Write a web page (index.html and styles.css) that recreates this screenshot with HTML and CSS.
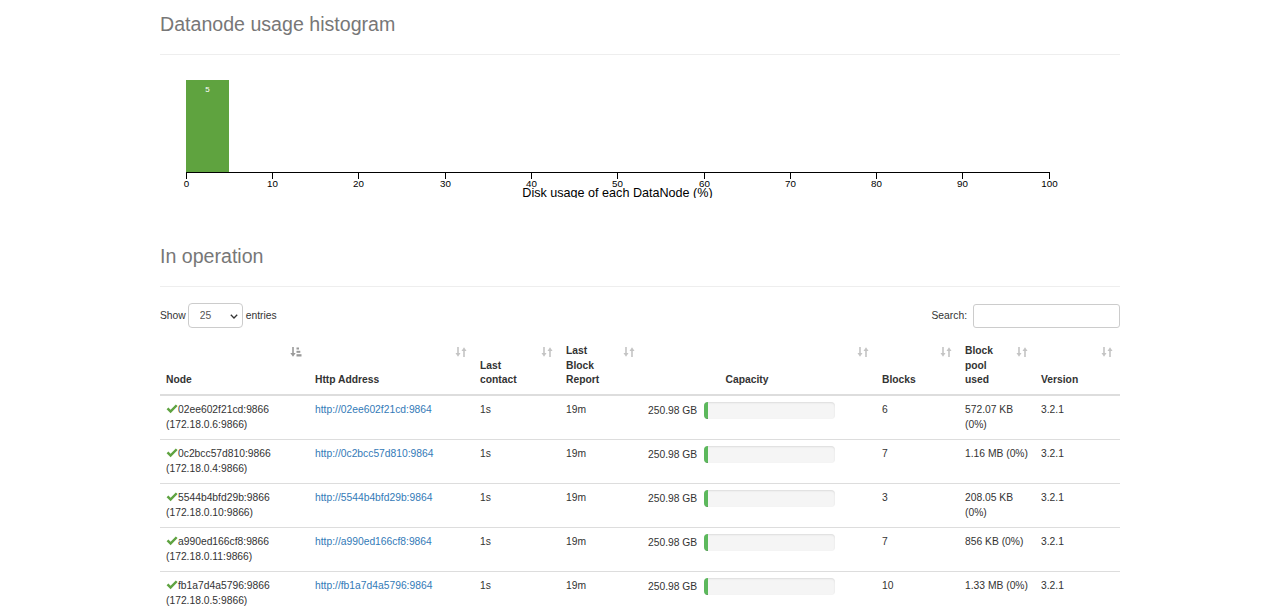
FILE: index.html
```html
<!DOCTYPE html>
<html lang="en">
<head>
<meta charset="utf-8">
<title>Datanode Information</title>
<link rel="stylesheet" href="styles.css">
</head>
<body>
<div class="container">
  <section class="section-hist">
    <div class="page-header"><h1>Datanode usage histogram</h1></div>
    <svg class="histogram" width="960" height="143" viewBox="0 0 960 143">
      <g class="bar">
        <rect x="26" y="25" width="43" height="92.5"></rect>
        <text x="47.5" y="37">5</text>
      </g>
      <g class="axis">
        <path d="M26.5,123.5V117.5H889.5V123.5"></path>
        <line x1="26.5" y1="117.5" x2="26.5" y2="123.5"></line>
        <line x1="112.5" y1="117.5" x2="112.5" y2="123.5"></line>
        <line x1="198.5" y1="117.5" x2="198.5" y2="123.5"></line>
        <line x1="285.5" y1="117.5" x2="285.5" y2="123.5"></line>
        <line x1="371.5" y1="117.5" x2="371.5" y2="123.5"></line>
        <line x1="457.5" y1="117.5" x2="457.5" y2="123.5"></line>
        <line x1="544.5" y1="117.5" x2="544.5" y2="123.5"></line>
        <line x1="630.5" y1="117.5" x2="630.5" y2="123.5"></line>
        <line x1="716.5" y1="117.5" x2="716.5" y2="123.5"></line>
        <line x1="802.5" y1="117.5" x2="802.5" y2="123.5"></line>
        <line x1="889.5" y1="117.5" x2="889.5" y2="123.5"></line>
        <text x="26.5" y="131.5">0</text>
        <text x="112.5" y="131.5">10</text>
        <text x="198.5" y="131.5">20</text>
        <text x="285.5" y="131.5">30</text>
        <text x="371.5" y="131.5">40</text>
        <text x="457.5" y="131.5">50</text>
        <text x="544.5" y="131.5">60</text>
        <text x="630.5" y="131.5">70</text>
        <text x="716.5" y="131.5">80</text>
        <text x="802.5" y="131.5">90</text>
        <text x="889.5" y="131.5">100</text>
      </g>
      <text class="axis-label" x="457.5" y="141.5">Disk usage of each DataNode (%)</text>
    </svg>
  </section>

  <section class="section-op">
    <div class="page-header"><h1>In operation</h1></div>

    <div class="dt-controls">
      <label class="dt-length">
        <span>Show</span>
        <span class="select-wrap">
          <select class="dt-select"><option>25</option><option>50</option><option>100</option></select>
          <svg class="chev" width="8" height="5" viewBox="0 0 8 5"><path d="M0.8 0.8 L4 4 L7.2 0.8" fill="none" stroke="#333" stroke-width="1.3"/></svg>
        </span>
        <span>entries</span>
      </label>
      <label class="dt-search">
        <span>Search:</span>
        <input type="search" class="dt-input">
      </label>
    </div>

    <table class="dn-table">
      <colgroup>
        <col class="c-node"><col class="c-http"><col class="c-contact"><col class="c-report"><col class="c-cap"><col class="c-blocks"><col class="c-pool"><col class="c-ver">
      </colgroup>
      <thead>
        <tr>
          <th>Node<svg class="sort sorted" width="12" height="10" viewBox="0 0 12 10"><path d="M3 0 V7" stroke="currentColor" stroke-width="1.6"/><path d="M0.3 6 H5.7 L3 9.8 Z" fill="currentColor"/><rect x="6.5" y="0.5" width="2.5" height="2" fill="currentColor"/><rect x="6.5" y="3.8" width="3.8" height="2" fill="currentColor"/><rect x="6.5" y="7.2" width="5" height="2.3" fill="currentColor"/></svg></th>
          <th>Http Address<svg class="sort" width="12" height="10" viewBox="0 0 12 10"><path d="M3 0 V7" stroke="currentColor" stroke-width="1.6"/><path d="M0.5 6 H5.5 L3 9.8 Z" fill="currentColor"/><path d="M9 3 V10" stroke="currentColor" stroke-width="1.6"/><path d="M6.5 4 H11.5 L9 0.2 Z" fill="currentColor"/></svg></th>
          <th>Last contact<svg class="sort" width="12" height="10" viewBox="0 0 12 10"><path d="M3 0 V7" stroke="currentColor" stroke-width="1.6"/><path d="M0.5 6 H5.5 L3 9.8 Z" fill="currentColor"/><path d="M9 3 V10" stroke="currentColor" stroke-width="1.6"/><path d="M6.5 4 H11.5 L9 0.2 Z" fill="currentColor"/></svg></th>
          <th>Last Block Report<svg class="sort" width="12" height="10" viewBox="0 0 12 10"><path d="M3 0 V7" stroke="currentColor" stroke-width="1.6"/><path d="M0.5 6 H5.5 L3 9.8 Z" fill="currentColor"/><path d="M9 3 V10" stroke="currentColor" stroke-width="1.6"/><path d="M6.5 4 H11.5 L9 0.2 Z" fill="currentColor"/></svg></th>
          <th class="th-center">Capacity<svg class="sort" width="12" height="10" viewBox="0 0 12 10"><path d="M3 0 V7" stroke="currentColor" stroke-width="1.6"/><path d="M0.5 6 H5.5 L3 9.8 Z" fill="currentColor"/><path d="M9 3 V10" stroke="currentColor" stroke-width="1.6"/><path d="M6.5 4 H11.5 L9 0.2 Z" fill="currentColor"/></svg></th>
          <th>Blocks<svg class="sort" width="12" height="10" viewBox="0 0 12 10"><path d="M3 0 V7" stroke="currentColor" stroke-width="1.6"/><path d="M0.5 6 H5.5 L3 9.8 Z" fill="currentColor"/><path d="M9 3 V10" stroke="currentColor" stroke-width="1.6"/><path d="M6.5 4 H11.5 L9 0.2 Z" fill="currentColor"/></svg></th>
          <th>Block pool used<svg class="sort" width="12" height="10" viewBox="0 0 12 10"><path d="M3 0 V7" stroke="currentColor" stroke-width="1.6"/><path d="M0.5 6 H5.5 L3 9.8 Z" fill="currentColor"/><path d="M9 3 V10" stroke="currentColor" stroke-width="1.6"/><path d="M6.5 4 H11.5 L9 0.2 Z" fill="currentColor"/></svg></th>
          <th>Version<svg class="sort" width="12" height="10" viewBox="0 0 12 10"><path d="M3 0 V7" stroke="currentColor" stroke-width="1.6"/><path d="M0.5 6 H5.5 L3 9.8 Z" fill="currentColor"/><path d="M9 3 V10" stroke="currentColor" stroke-width="1.6"/><path d="M6.5 4 H11.5 L9 0.2 Z" fill="currentColor"/></svg></th>
        </tr>
      </thead>
      <tbody>
        <tr>
          <td><svg class="ok" width="12" height="10" viewBox="0 0 12 10"><path d="M0.6 5.2 L2.4 3.5 L4.6 5.7 L9.8 0.4 L11.6 2.1 L4.6 9.2 Z" fill="currentColor"/></svg>02ee602f21cd:9866<br>(172.18.0.6:9866)</td>
          <td><a href="#">http://02ee602f21cd:9864</a></td>
          <td>1s</td>
          <td>19m</td>
          <td><div class="cap"><span class="cap-label">250.98 GB</span><div class="progress"><div class="progress-bar" style="width:3%"></div></div></div></td>
          <td>6</td>
          <td>572.07 KB (0%)</td>
          <td>3.2.1</td>
        </tr>
        <tr>
          <td><svg class="ok" width="12" height="10" viewBox="0 0 12 10"><path d="M0.6 5.2 L2.4 3.5 L4.6 5.7 L9.8 0.4 L11.6 2.1 L4.6 9.2 Z" fill="currentColor"/></svg>0c2bcc57d810:9866<br>(172.18.0.4:9866)</td>
          <td><a href="#">http://0c2bcc57d810:9864</a></td>
          <td>1s</td>
          <td>19m</td>
          <td><div class="cap"><span class="cap-label">250.98 GB</span><div class="progress"><div class="progress-bar" style="width:3%"></div></div></div></td>
          <td>7</td>
          <td>1.16 MB (0%)</td>
          <td>3.2.1</td>
        </tr>
        <tr>
          <td><svg class="ok" width="12" height="10" viewBox="0 0 12 10"><path d="M0.6 5.2 L2.4 3.5 L4.6 5.7 L9.8 0.4 L11.6 2.1 L4.6 9.2 Z" fill="currentColor"/></svg>5544b4bfd29b:9866<br>(172.18.0.10:9866)</td>
          <td><a href="#">http://5544b4bfd29b:9864</a></td>
          <td>1s</td>
          <td>19m</td>
          <td><div class="cap"><span class="cap-label">250.98 GB</span><div class="progress"><div class="progress-bar" style="width:3%"></div></div></div></td>
          <td>3</td>
          <td>208.05 KB (0%)</td>
          <td>3.2.1</td>
        </tr>
        <tr>
          <td><svg class="ok" width="12" height="10" viewBox="0 0 12 10"><path d="M0.6 5.2 L2.4 3.5 L4.6 5.7 L9.8 0.4 L11.6 2.1 L4.6 9.2 Z" fill="currentColor"/></svg>a990ed166cf8:9866<br>(172.18.0.11:9866)</td>
          <td><a href="#">http://a990ed166cf8:9864</a></td>
          <td>1s</td>
          <td>19m</td>
          <td><div class="cap"><span class="cap-label">250.98 GB</span><div class="progress"><div class="progress-bar" style="width:3%"></div></div></div></td>
          <td>7</td>
          <td>856 KB (0%)</td>
          <td>3.2.1</td>
        </tr>
        <tr>
          <td><svg class="ok" width="12" height="10" viewBox="0 0 12 10"><path d="M0.6 5.2 L2.4 3.5 L4.6 5.7 L9.8 0.4 L11.6 2.1 L4.6 9.2 Z" fill="currentColor"/></svg>fb1a7d4a5796:9866<br>(172.18.0.5:9866)</td>
          <td><a href="#">http://fb1a7d4a5796:9864</a></td>
          <td>1s</td>
          <td>19m</td>
          <td><div class="cap"><span class="cap-label">250.98 GB</span><div class="progress"><div class="progress-bar" style="width:3%"></div></div></div></td>
          <td>10</td>
          <td>1.33 MB (0%)</td>
          <td>3.2.1</td>
        </tr>
      </tbody>
    </table>
  </section>
</div>
</body>
</html>
```
FILE: styles.css
```css
* {
  box-sizing: border-box;
}

html,
body {
  margin: 0;
  padding: 0;
}

body {
  font-family: "Liberation Sans", Arial, sans-serif;
  font-size: 10.3px;
  line-height: 15px;
  color: #333;
  background: #fff;
}

.container {
  width: 960px;
  margin: 0 auto;
}

.page-header {
  margin: 13px 0 0;
  padding-bottom: 19px;
  border-bottom: 1px solid #eee;
}

.page-header h1 {
  margin: 0;
  font-size: 19.6px;
  line-height: 22px;
  font-weight: normal;
  color: #777;
}

.section-op .page-header {
  margin-top: 47px;
}

/* histogram */
.histogram {
  display: block;
  overflow: hidden;
}

.bar rect {
  fill: #5fa33f;
}

.bar text {
  fill: #fff;
  font-family: "Liberation Sans", Arial, sans-serif;
  font-size: 8px;
  text-anchor: middle;
}

.axis path,
.axis line {
  fill: none;
  stroke: #000;
  stroke-width: 1;
  shape-rendering: crispEdges;
}

.axis text {
  fill: #000;
  font-family: "Liberation Sans", Arial, sans-serif;
  font-size: 9.8px;
  text-anchor: middle;
}

.axis-label {
  fill: #000;
  font-family: "Liberation Sans", Arial, sans-serif;
  font-size: 12.6px;
  text-anchor: middle;
}

/* datatable controls */
.dt-controls {
  display: flex;
  justify-content: space-between;
  align-items: center;
  margin-top: 16px;
  height: 25px;
}

.dt-length,
.dt-search {
  display: flex;
  align-items: center;
  font-weight: normal;
}

.dt-length {
  gap: 2px;
}

.dt-length > span:last-child {
  margin-left: 1px;
}

.select-wrap {
  position: relative;
  display: inline-block;
  width: 55px;
  height: 25px;
}

.dt-select {
  appearance: none;
  -webkit-appearance: none;
  width: 55px;
  height: 25px;
  margin: 0;
  padding: 0 0 0 11px;
  border: 1px solid #ccc;
  border-radius: 4px;
  background: #fff;
  font-family: "Liberation Sans", Arial, sans-serif;
  font-size: 10.3px;
  color: #555;
}

.chev {
  position: absolute;
  right: 5px;
  top: 11px;
  pointer-events: none;
}

.dt-search {
  gap: 6px;
}

.dt-input {
  width: 147px;
  height: 24px;
  margin: 0;
  padding: 0 6px;
  border: 1px solid #ccc;
  border-radius: 3px;
  background: #fff;
  font-family: "Liberation Sans", Arial, sans-serif;
  font-size: 10.3px;
}

/* table */
.dn-table {
  width: 960px;
  margin-top: 10px;
  border-collapse: collapse;
  table-layout: fixed;
}

.c-node { width: 149px; }
.c-http { width: 165px; }
.c-contact { width: 86px; }
.c-report { width: 82px; }
.c-cap { width: 234px; }
.c-blocks { width: 83px; }
.c-pool { width: 76px; }
.c-ver { width: 85px; }

.dn-table th {
  position: relative;
  padding: 6px 30px 6px 6px;
  vertical-align: bottom;
  text-align: left;
  font-weight: bold;
  line-height: 14.7px;
  border-bottom: 2px solid #ddd;
}

.dn-table th.th-center {
  text-align: center;
}

.sort {
  position: absolute;
  top: 9px;
  right: 7px;
  color: #c4c4c4;
}

.sort.sorted {
  color: #9a9a9a;
}

.dn-table td {
  padding: 6px 5px 6px 6px;
  vertical-align: top;
  border-top: 1px solid #ddd;
}

.dn-table tbody tr:first-child td {
  border-top: 0;
}

.ok {
  color: #5fa341;
  vertical-align: -1px;
  margin-right: 0;
}

.dn-table a {
  color: #337ab7;
  text-decoration: none;
}

.cap {
  display: flex;
  align-items: flex-start;
}

.cap-label {
  padding-top: 1px;
  margin-right: 7px;
}

.progress {
  width: 131px;
  height: 17px;
  margin-bottom: 14px;
  background: #f5f5f5;
  border-radius: 4px;
  box-shadow: inset 0 1px 2px rgba(0, 0, 0, 0.1);
  overflow: hidden;
}

.progress-bar {
  height: 100%;
  background: #5cb85c;
  box-shadow: inset 0 -1px 0 rgba(0, 0, 0, 0.15);
}
```
